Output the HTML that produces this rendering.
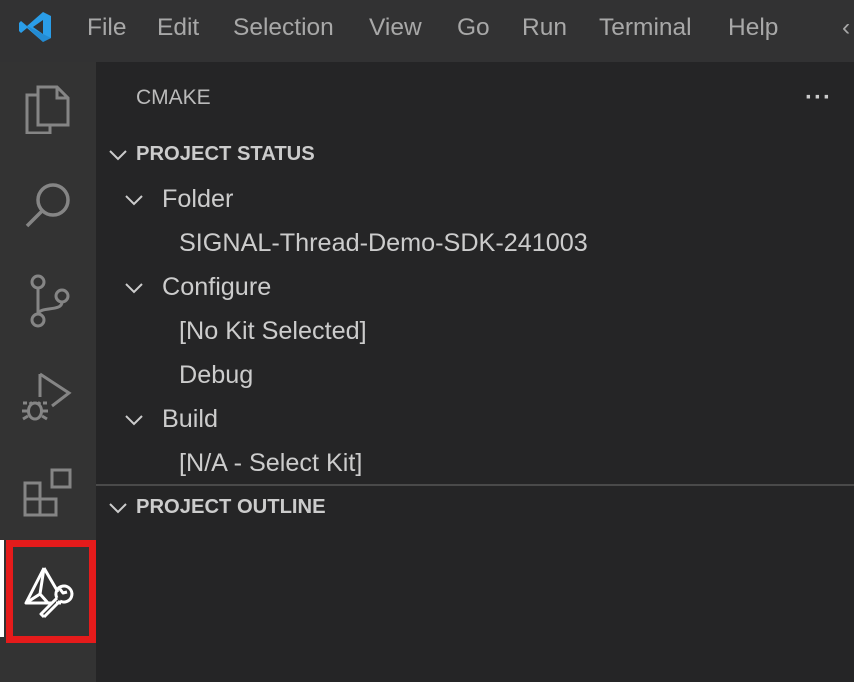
<!DOCTYPE html>
<html><head><meta charset="utf-8"><style>
*{margin:0;padding:0;box-sizing:border-box}
body{width:854px;height:682px;overflow:hidden;background:#252526;font-family:"Liberation Sans",sans-serif;position:relative}
.title{position:absolute;left:0;top:0;width:854px;height:62px;background:#323233}
.menu{position:absolute;top:14px;font-size:24.5px;color:#a8a8a8}
.act{position:absolute;left:0;top:62px;width:96px;height:620px;background:#333333}
.side{position:absolute;left:96px;top:62px;width:758px;height:620px;background:#252526}
.t{position:absolute;font-size:25.2px;color:#cccccc;white-space:nowrap}
.h{position:absolute;font-size:20.2px;font-weight:bold;color:#cccccc}
svg{position:absolute}
</style></head><body>
<div class="title">
<svg style="left:18px;top:10px" width="34" height="34" viewBox="0 0 34 34"><path d="M25 2 L33 6 V28 L25 32 L9 18 L3 23 L1 21 V13 L3 11 L9 16 Z M25 10 L15 17 L25 24 Z" fill="#2a9de8"/><path d="M3 11 L25 32 L33 28 L9 16Z" fill="#1f7fc4" opacity=".6"/></svg>
<div class="menu" style="left:87px">File</div>
<div class="menu" style="left:157px">Edit</div>
<div class="menu" style="left:233px">Selection</div>
<div class="menu" style="left:369px">View</div>
<div class="menu" style="left:457px">Go</div>
<div class="menu" style="left:522px">Run</div>
<div class="menu" style="left:599px">Terminal</div>
<div class="menu" style="left:728px">Help</div>
<div class="menu" style="left:842px">&lsaquo;</div>
</div>
<div class="act">
<svg style="left:24px;top:22px" width="48" height="50" viewBox="0 0 48 50" fill="none" stroke="#858585" stroke-width="3"><path d="M14 11 H3 V49 H26 V42"/><path d="M14 3 H33 L44 14 V41 H14 Z"/><path d="M33 3 V14 H44"/></svg>
<svg style="left:22px;top:118px" width="52" height="52" viewBox="0 0 52 52" fill="none" stroke="#858585" stroke-width="3.5"><circle cx="31" cy="20" r="15"/><path d="M20 31 L5 46"/></svg>
<svg style="left:26px;top:212px" width="46" height="54" viewBox="0 0 46 54" fill="none" stroke="#858585" stroke-width="3"><circle cx="12" cy="8" r="6"/><circle cx="12" cy="46" r="6"/><circle cx="36" cy="22" r="6"/><path d="M12 14 V40 M36 28 C36 38 14 32 12 40"/></svg>
<svg style="left:0;top:303px" width="96" height="60" viewBox="0 303 96 60" fill="none" stroke="#858585" stroke-width="3"><path d="M40 312 V335 M40 312 L69 331 L52 344"/><ellipse cx="35" cy="349" rx="6.5" ry="8"/><path d="M30 340 L32 343 M40 340 L38 343 M23 341 H27 M43 341 H47 M22 349 H28 M42 349 H48 M23 357 L28 354 M47 357 L42 354"/></svg>
<svg style="left:22px;top:405px" width="52" height="52" viewBox="0 0 52 52" fill="none" stroke="#858585" stroke-width="3"><path d="M3 16 H18 V48 H3 Z M3 32 H34 V48 H18"/><rect x="30" y="3" width="18" height="17"/></svg>
<div style="position:absolute;left:0;top:478px;width:4px;height:97px;background:#ffffff"></div>
<div style="position:absolute;left:6px;top:478px;width:90px;height:103px;border:7px solid #e51b1b"></div>
<svg style="left:0;top:493px" width="96" height="70" viewBox="0 493 96 70" fill="none" stroke="#ffffff" stroke-width="3" stroke-linejoin="round"><path d="M44 506 L26 541 L52 541 M44 506 L58 530"/><path d="M44 506 L40 532 L26 541 M40 532 L48 541"/><path d="M44 555 L41 552 L57 536 M44 555 L60 539"/><path d="M57 536 A8 8 0 1 1 60 539 M60 527 L63 531 L67 530"/><path d="M56 541 L61 541"/></svg>
</div>
<div class="side">
<div class="t" style="left:40px;top:24px;font-size:21px;color:#bbbbbb">CMAKE</div>
<div style="position:absolute;left:709px;top:22px;color:#cccccc;font-size:24px;letter-spacing:1px;font-weight:bold">&middot;&middot;&middot;</div>
<svg style="left:12px;top:86px" width="20" height="14" viewBox="0 0 20 14" fill="none" stroke="#cccccc" stroke-width="2"><path d="M2 3 L10 11 L18 3"/></svg>
<div class="h" style="left:40px;top:81px">PROJECT STATUS</div>
<svg style="left:28px;top:131px" width="20" height="14" viewBox="0 0 20 14" fill="none" stroke="#cccccc" stroke-width="2"><path d="M2 3 L10 11 L18 3"/></svg>
<div class="t" style="left:66px;top:123px">Folder</div>
<div class="t" style="left:83px;top:167px">SIGNAL-Thread-Demo-SDK-241003</div>
<svg style="left:28px;top:219px" width="20" height="14" viewBox="0 0 20 14" fill="none" stroke="#cccccc" stroke-width="2"><path d="M2 3 L10 11 L18 3"/></svg>
<div class="t" style="left:66px;top:211px">Configure</div>
<div class="t" style="left:83px;top:255px">[No Kit Selected]</div>
<div class="t" style="left:83px;top:299px">Debug</div>
<svg style="left:28px;top:351px" width="20" height="14" viewBox="0 0 20 14" fill="none" stroke="#cccccc" stroke-width="2"><path d="M2 3 L10 11 L18 3"/></svg>
<div class="t" style="left:66px;top:343px">Build</div>
<div class="t" style="left:83px;top:387px">[N/A - Select Kit]</div>
<div style="position:absolute;left:0;top:422px;width:758px;height:2px;background:#4a4a4a"></div>
<svg style="left:12px;top:439px" width="20" height="14" viewBox="0 0 20 14" fill="none" stroke="#cccccc" stroke-width="2"><path d="M2 3 L10 11 L18 3"/></svg>
<div class="h" style="left:40px;top:434px">PROJECT OUTLINE</div>
</div>
</body></html>
